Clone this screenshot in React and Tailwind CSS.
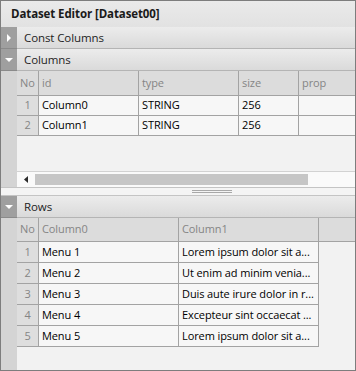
import React from 'react';

const font = { fontFamily: '"Open Sans", "Noto Sans", sans-serif' };

// Triangle glyph used in the section headers
function Arrow({ open }) {
  return (
    <svg width="8" height="8" viewBox="0 0 8 8">
      {open ? <path d="M0 2 L8 2 L4 6 Z" fill="#ffffff" /> : <path d="M2 0 L6 4 L2 8 Z" fill="#ffffff" />}
    </svg>
  );
}

function SectionHeader({ label, open }) {
  return (
    <div className="flex h-[22px] shrink-0">
      <div className="w-[16px] bg-[#9f9f9f] border-b border-[#8a8a8a] flex items-center justify-center">
        <Arrow open={open} />
      </div>
      <div className="flex-1 flex items-center pl-[7px] bg-gradient-to-b from-[#ececec] to-[#dadada] border-b border-[#b4b4b4] text-[11.5px] text-[#1e1e1e]">
        {label}
      </div>
    </div>
  );
}

const COLS = [
  { id: 'Column0', type: 'STRING', size: '256' },
  { id: 'Column1', type: 'STRING', size: '256' },
];

const ROWS = [
  ['Menu 1', 'Lorem ipsum dolor sit a...'],
  ['Menu 2', 'Ut enim ad minim venia...'],
  ['Menu 3', 'Duis aute irure dolor in r...'],
  ['Menu 4', 'Excepteur sint occaecat ...'],
  ['Menu 5', 'Lorem ipsum dolor sit a...'],
];

const head = 'flex items-center px-[3px] border-r border-b border-[#a3a3a3] text-[#858585]';
const cell = 'flex items-center px-[3px] border-r border-b border-[#a3a3a3] bg-[#f7f7f7] text-black whitespace-nowrap overflow-hidden';
const noCell = 'w-[22px] flex items-center justify-center border-r border-b border-[#a3a3a3] bg-[#dedede] text-[#858585]';

export default function App() {
  return (
    <div style={font} className="w-[356px] h-[371px] border border-[#7d7d7d] bg-[#f2f2f2] flex flex-col overflow-hidden text-[11px] tracking-[-0.1px]">
      <div className="h-[26px] shrink-0 flex items-center pl-[10px] font-bold text-[11.5px] text-[#1a1a1a] bg-gradient-to-b from-[#eaeaea] to-[#e2e2e2]">
        Dataset Editor [Dataset00]
      </div>

      <SectionHeader label="Const Columns" />
      <SectionHeader label="Columns" open />

      {/* Columns grid */}
      <div className="flex h-[116px] shrink-0">
        <div className="w-[16px] bg-[#d4d4d4]" />
        <div className="flex-1 flex flex-col">
          <div className="flex h-[25px] bg-[#dcdcdc]">
            <div className={`${head} w-[22px] pl-[3px]`}>No</div>
            <div className={`${head} w-[100px]`}>id</div>
            <div className={`${head} w-[100px]`}>type</div>
            <div className={`${head} w-[60px]`}>size</div>
            <div className={`${head} flex-1 border-r-0`}>prop</div>
          </div>
          {COLS.map((c, i) => (
            <div key={c.id} className="flex h-[20px]">
              <div className={noCell}>{i + 1}</div>
              <div className={`${cell} w-[100px]`}>{c.id}</div>
              <div className={`${cell} w-[100px]`}>{c.type}</div>
              <div className={`${cell} w-[60px]`}>{c.size}</div>
              <div className={`${cell} flex-1 border-r-0`} />
            </div>
          ))}
          <div className="flex-1" />
          {/* horizontal scrollbar */}
          <div className="h-[16px] border-t border-[#d2d2d2] flex items-center bg-[#fafafa]">
            <div className="w-[18px] flex items-center justify-center">
              <svg width="4" height="7" viewBox="0 0 4 7"><path d="M4 0 L0 3.5 L4 7 Z" fill="#2a2a2a" /></svg>
            </div>
            <div className="w-[273px] h-[11px] bg-[#c6c6c6]" />
          </div>
        </div>
      </div>

      {/* splitter */}
      <div className="h-[9px] shrink-0 border-t border-b border-[#c4c4c4] bg-[#f4f4f4] flex flex-col items-center justify-center gap-[1px]">
        <div className="w-[40px] h-px bg-[#a8a8a8] ml-[68px]" />
        <div className="w-[40px] h-px bg-[#a8a8a8] ml-[68px]" />
      </div>

      <SectionHeader label="Rows" open />

      {/* Rows grid */}
      <div className="flex flex-1">
        <div className="w-[16px] bg-[#d4d4d4]" />
        <div className="flex-1 flex flex-col">
          <div className="flex h-[24px] bg-[#dcdcdc]">
            <div className={`${head} w-[22px] pl-[3px]`}>No</div>
            <div className={`${head} w-[140px]`}>Column0</div>
            <div className={`${head} w-[140px]`}>Column1</div>
            <div className="flex-1 border-b border-[#a3a3a3]" />
          </div>
          {ROWS.map((r, i) => (
            <div key={i} className="flex h-[21px]">
              <div className={noCell}>{i + 1}</div>
              <div className={`${cell} w-[140px]`}>{r[0]}</div>
              <div className={`${cell} w-[140px]`}>{r[1]}</div>
            </div>
          ))}
        </div>
      </div>
    </div>
  );
}
